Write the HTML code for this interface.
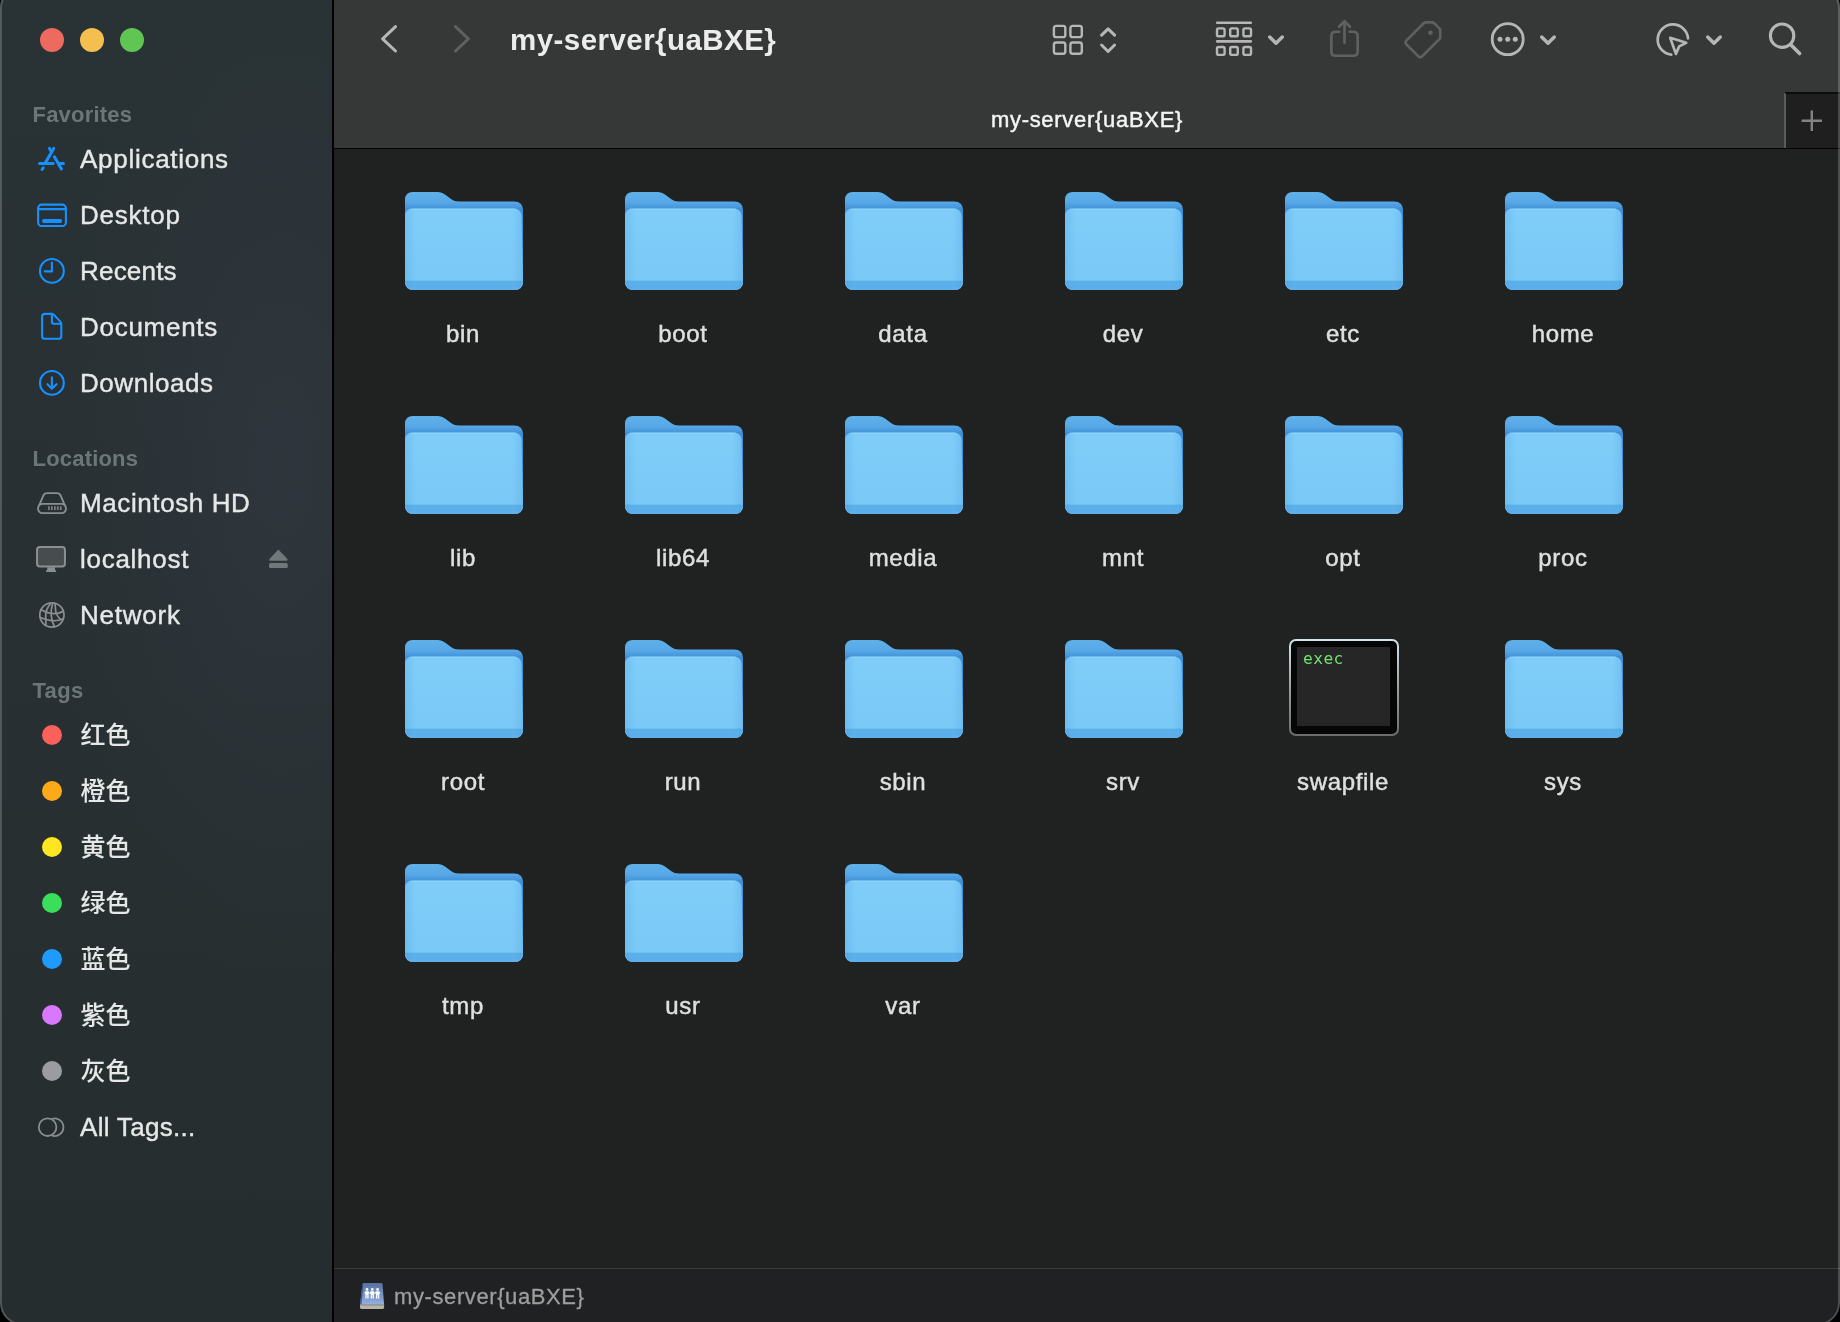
<!DOCTYPE html>
<html lang="en"><head><meta charset="utf-8"><title>my-server{uaBXE}</title>
<style>
*{box-sizing:border-box;margin:0;padding:0}
html,body{width:1840px;height:1322px;overflow:hidden;background:#000}
body{font-family:'Liberation Sans','Noto Sans CJK SC',sans-serif;position:relative;color:#e6e6e6}
.win{position:absolute;left:0;top:-14px;width:1840px;height:1338.6px;border-radius:22px;overflow:hidden;background:#1f2121}
.win:after{content:"";position:absolute;inset:0;border-radius:22px;border:2px solid rgba(255,255,255,.2);pointer-events:none;z-index:50}
.abs{position:absolute}
.sidebar{position:absolute;left:0;top:0;width:332px;height:1340px;background:radial-gradient(ellipse 70% 38% at 85% 36%,rgba(49,55,63,.75),rgba(49,55,63,0) 100%),linear-gradient(180deg,#293235 0%,#283033 45%,#252d2e 100%)}
.vsep{position:absolute;left:332px;top:0;width:2px;height:1340px;background:#000}
.toolbar{position:absolute;left:334px;top:0;width:1506px;height:162px;background:#363737}
.tbline{position:absolute;left:334px;top:161.7px;width:1506px;height:1.6px;background:#000}
.content{position:absolute;left:334px;top:163px;width:1506px;height:1119px;background:#202222}
.status{position:absolute;left:334px;top:1282px;width:1506px;height:54px;background:#202123;border-top:1.5px solid #3c3e3e}
.tl{position:absolute;width:24px;height:24px;border-radius:50%;top:42px}
.hdr{position:absolute;left:32.5px;font-size:22px;font-weight:700;color:#6c7679;line-height:30px;height:30px;white-space:nowrap}
.item{position:absolute;left:80px;font-size:26px;color:#e6e8e8;-webkit-text-stroke:.4px #e6e8e8;line-height:36px;height:36px;white-space:nowrap}
.dot{position:absolute;left:42px;width:20px;height:20px;border-radius:50%}
.lbl{position:absolute;width:200px;text-align:center;font-size:24px;line-height:32px;height:32px;color:#dfdfdf;-webkit-text-stroke:.45px #e2e2e2;letter-spacing:.65px;white-space:nowrap}
.title{position:absolute;left:510px;top:36px;font-size:29.5px;font-weight:700;line-height:36px;color:#ececec;white-space:nowrap;letter-spacing:.45px}
.tabtitle{position:absolute;left:334px;width:1506px;top:120.3px;text-align:center;font-size:22px;line-height:28px;color:#f4f4f4;white-space:nowrap;letter-spacing:.7px;-webkit-text-stroke:.45px #f4f4f4}
.newtab{position:absolute;left:1784px;top:106px;width:56px;height:56px;background:#1f1f1f;border-left:2px solid #5a5b5b;border-top:2px solid #0c0c0c}
.path{position:absolute;left:394px;top:1297px;font-size:22px;line-height:28px;color:#9e9e9e;white-space:nowrap;letter-spacing:.6px;-webkit-text-stroke:.3px #9e9e9e}
svg{position:absolute;overflow:visible}
.cjk{font-size:25px;font-weight:500;-webkit-text-stroke:0;left:80.5px}
.win{will-change:transform}

.exec{position:absolute;width:110px;height:97px;border-radius:7px;background:linear-gradient(180deg,#d6e6ee 0%,#9aa0a3 50%,#6c6c6c 100%);padding:1.6px}
.execin{width:100%;height:100%;border-radius:5px;background:#060606;padding:6px 7px 8px 6px;position:relative}
.execin:before{content:"";position:absolute;left:6px;top:6px;right:7px;bottom:8px;background:#262626}
.execin span{position:absolute;left:12.4px;top:7.1px;font-family:'DejaVu Sans Mono','Liberation Mono',monospace;font-size:16.3px;line-height:22px;color:#6fe26f;letter-spacing:.4px}
</style></head>
<body>
<svg width="0" height="0" style="position:absolute"><defs>
<linearGradient id="fback" gradientUnits="userSpaceOnUse" x1="0" y1="0" x2="0" y2="18"><stop offset="0" stop-color="#60b0e9"/><stop offset=".55" stop-color="#58a9e6"/><stop offset="1" stop-color="#3f8fd8"/></linearGradient>
<linearGradient id="ffront" x1="0" y1="0" x2="0" y2="1"><stop offset="0" stop-color="#80cdf9"/><stop offset="1" stop-color="#79c8f6"/></linearGradient>
<linearGradient id="fside" x1="0" y1="0" x2="1" y2="0"><stop offset="0" stop-color="#4a9fe0" stop-opacity=".3"/><stop offset=".09" stop-color="#4a9fe0" stop-opacity="0"/><stop offset=".91" stop-color="#4a9fe0" stop-opacity="0"/><stop offset="1" stop-color="#4a9fe0" stop-opacity=".3"/></linearGradient>
</defs></svg>
<div class="win">
<div class="sidebar"></div><div class="vsep"></div><div class="toolbar"></div><div class="tbline"></div><div class="content"></div><div class="status"></div>
<div class="tl" style="left:40px;background:#ed6a5e"></div>
<div class="tl" style="left:80px;background:#f5bf4f"></div>
<div class="tl" style="left:120px;background:#61c554"></div>
<div class="hdr" style="top:114px;letter-spacing:0.2px">Favorites</div>
<div class="item" style="top:155px;letter-spacing:0.72px">Applications</div>
<div class="item" style="top:211px;letter-spacing:0.75px">Desktop</div>
<div class="item" style="top:267px;letter-spacing:0.2px">Recents</div>
<div class="item" style="top:323px;letter-spacing:0.72px">Documents</div>
<div class="item" style="top:379px;letter-spacing:0.55px">Downloads</div>
<div class="hdr" style="top:458px;letter-spacing:0.2px">Locations</div>
<div class="item" style="top:499px;letter-spacing:0.6px">Macintosh HD</div>
<div class="item" style="top:555px;letter-spacing:0.72px">localhost</div>
<div class="item" style="top:611px;letter-spacing:0.78px">Network</div>
<div class="hdr" style="top:690px;letter-spacing:0.3px">Tags</div>
<div class="dot" style="top:739px;background:#fc605b"></div>
<div class="item cjk" style="top:731px">红色</div>
<div class="dot" style="top:795px;background:#fdaa1a"></div>
<div class="item cjk" style="top:787px">橙色</div>
<div class="dot" style="top:851px;background:#ffe620"></div>
<div class="item cjk" style="top:843px">黄色</div>
<div class="dot" style="top:907px;background:#39de5b"></div>
<div class="item cjk" style="top:899px">绿色</div>
<div class="dot" style="top:963px;background:#1f9bff"></div>
<div class="item cjk" style="top:955px">蓝色</div>
<div class="dot" style="top:1019px;background:#d878ff"></div>
<div class="item cjk" style="top:1011px">紫色</div>
<div class="dot" style="top:1075px;background:#9b9ca1"></div>
<div class="item cjk" style="top:1067px">灰色</div>
<div class="item" style="top:1123px;letter-spacing:0.3px">All Tags...</div>
<svg style="left:30px;top:154px" width="44" height="40" viewBox="0 0 44 40" ><g fill="none" stroke="#1791ff" stroke-width="3" stroke-linecap="round"><path d="M23.7 8.4 L15.4 22.8"/><path d="M19.5 8.4 L21.6 12"/><path d="M24.4 16.8 L31.4 29"/><path d="M9.6 23.5 H23.2"/><path d="M28.9 23.5 H33.4"/><path d="M13.2 27.8 L12.1 29.5"/></g></svg>
<svg style="left:30px;top:210px" width="44" height="40" viewBox="0 0 44 40" ><g fill="none" stroke="#1791ff" stroke-width="2.1"><rect x="8.1" y="8.6" width="27.8" height="21.4" rx="3.6"/><path d="M8.1 13.1 H35.9"/></g><rect x="12.3" y="23" width="19.5" height="3.9" rx="1.2" fill="#1791ff"/></svg>
<svg style="left:30px;top:266px" width="44" height="40" viewBox="0 0 44 40" ><g fill="none" stroke="#1791ff" stroke-width="2.1" stroke-linecap="round" stroke-linejoin="round"><circle cx="21.9" cy="18.9" r="11.9"/><path d="M21.9 10.6 V19.4 H14.8"/></g></svg>
<svg style="left:30px;top:322px" width="44" height="40" viewBox="0 0 44 40" ><g fill="none" stroke="#1791ff" stroke-width="2.1" stroke-linejoin="round"><path d="M15 5.9 H21.6 Q23 5.9 24 6.9 L30.3 13.6 Q31.3 14.7 31.3 16 V27.9 Q31.3 30.8 28.4 30.8 H15 Q12.1 30.8 12.1 27.9 V8.8 Q12.1 5.9 15 5.9 Z"/><path d="M21.9 6 V13.4 Q21.9 15.7 24.2 15.7 H31.2"/></g></svg>
<svg style="left:30px;top:378px" width="44" height="40" viewBox="0 0 44 40" ><g fill="none" stroke="#1791ff" stroke-width="2.1" stroke-linecap="round" stroke-linejoin="round"><circle cx="21.9" cy="18.9" r="11.9"/><path d="M21.9 13.2 V24.6 M17.5 20.2 L21.9 24.7 L26.5 20.2"/></g></svg>
<svg style="left:30px;top:498px" width="44" height="40" viewBox="0 0 44 40" ><g fill="none" stroke="#8c8f91" stroke-width="1.9" stroke-linejoin="round"><rect x="8.05" y="19.9" width="27.9" height="9.2" rx="4.6"/><path d="M8.9 22.2 L13.3 11.6 Q14.4 9.15 17 9.15 H27 Q29.6 9.15 30.7 11.6 L35.1 22.2"/></g><g fill="#8c8f91" opacity=".85"><rect x="18.1" y="22.3" width="1.7" height="3.8"/><rect x="21" y="22.3" width="1.7" height="3.8"/><rect x="24" y="22.3" width="1.7" height="3.8"/><rect x="26.9" y="22.3" width="1.7" height="3.8"/><rect x="29.9" y="22.3" width="1.7" height="3.8"/></g></svg>
<svg style="left:30px;top:554px" width="44" height="40" viewBox="0 0 44 40" ><rect x="7.05" y="7.05" width="27.9" height="19.5" rx="2.8" fill="#474c4f" stroke="#8c8f91" stroke-width="2"/><path d="M17.2 27.3 H25 V30.2 H26.1 V32 H16.1 V30.2 H17.2 Z" fill="#8c8f91"/></svg>
<svg style="left:256px;top:554px" width="44" height="40" viewBox="0 0 44 40" ><g fill="#70787b"><path d="M22.4 9.6 L31.4 19 Q32.2 20.8 30.6 20.8 H14.2 Q12.6 20.8 13.4 19 Z"/><rect x="13" y="22.9" width="18.8" height="5.1" rx="1.6"/></g></svg>
<svg style="left:30px;top:610px" width="44" height="40" viewBox="0 0 44 40" ><g fill="none" stroke="#8c8f91" stroke-width="1.7" stroke-linecap="round"><circle cx="21.9" cy="19" r="12.1"/><path d="M20.2 8 Q15.5 14 15.7 20 T16 29.2"/><path d="M22.6 7.6 Q20.6 14 21.3 20 T24.4 30.6"/><path d="M25.1 8 Q25.4 13 26 17 Q27.5 20.5 30.6 23.6"/><path d="M11 13.8 Q18 17.6 24 17.6 T33.2 15"/><path d="M10.4 21.4 Q16 24 22 24.6 T32.6 23"/></g></svg>
<svg style="left:30px;top:1122px" width="44" height="40" viewBox="0 0 44 40" ><g fill="none" stroke="#8a8d8d" stroke-width="1.8"><circle cx="17.6" cy="19.2" r="8.8"/><path d="M22 10.8 A8.8 8.8 0 1 1 22 27.6"/></g></svg>
<div class="title">my-server{uaBXE}</div>
<div class="tabtitle">my-server{uaBXE}</div>
<div class="newtab"></div>
<svg style="left:370px;top:28px" width="110" height="50" viewBox="0 0 110 50" ><path d="M25.5 12.6 L12.6 24.8 L25.5 37" fill="none" stroke="#b6b6b6" stroke-width="3" stroke-linecap="round" stroke-linejoin="round"/><path d="M85.5 12.6 L98.4 24.8 L85.5 37" fill="none" stroke="#5f6060" stroke-width="3" stroke-linecap="round" stroke-linejoin="round"/></svg>
<svg style="left:1040px;top:28px" width="80" height="50" viewBox="0 0 80 50" ><g fill="none" stroke="#b6b6b6" stroke-width="2.4"><rect x="13.9" y="11.9" width="11.4" height="11.2" rx="2.2"/><rect x="13.9" y="28.5" width="11.4" height="11.2" rx="2.2"/><rect x="30.4" y="11.9" width="11.4" height="11.2" rx="2.2"/><rect x="30.4" y="28.5" width="11.4" height="11.2" rx="2.2"/></g><g fill="none" stroke="#b6b6b6" stroke-width="3" stroke-linecap="round" stroke-linejoin="round"><path d="M61.6 21.2 L68.1 14.9 L74.6 21.2"/><path d="M61.6 31 L68.1 37.5 L74.6 31"/></g></svg>
<svg style="left:1210px;top:28px" width="50" height="50" viewBox="0 0 50 50" ><g fill="none" stroke="#b6b6b6" stroke-width="2.4"><rect x="7" y="14.4" width="7.6" height="7.9" rx="1.6"/><rect x="7" y="33" width="7.6" height="7.9" rx="1.6"/><rect x="20.2" y="14.4" width="7.6" height="7.9" rx="1.6"/><rect x="20.2" y="33" width="7.6" height="7.9" rx="1.6"/><rect x="33.4" y="14.4" width="7.6" height="7.9" rx="1.6"/><rect x="33.4" y="33" width="7.6" height="7.9" rx="1.6"/></g><g stroke="#b6b6b6" stroke-width="2.6" stroke-linecap="round"><path d="M7.2 8.8 H40.8"/><path d="M7.2 27.4 H40.8"/></g></svg>
<svg style="left:1266px;top:46.1px" width="20" height="16" viewBox="0 0 20 16" ><path d="M3.7 5 L10 11.3 L16.3 5" fill="none" stroke="#b6b6b6" stroke-width="3.4" stroke-linecap="round" stroke-linejoin="round"/></svg>
<svg style="left:1320px;top:28px" width="50" height="50" viewBox="0 0 50 50" ><g fill="none" stroke="#5f6060" stroke-width="2.7" stroke-linecap="round" stroke-linejoin="round"><path d="M19.3 17.75 H15.6 Q11.35 17.75 11.35 22 V37.5 Q11.35 41.75 15.6 41.75 H33.4 Q37.65 41.75 37.65 37.5 V22 Q37.65 17.75 33.4 17.75 H29.7"/><path d="M24.5 8 V28.8"/><path d="M19 12.7 L24.5 7.3 L30 12.7"/></g></svg>
<svg style="left:1400px;top:28px" width="50" height="50" viewBox="0 0 50 50" ><path d="M26.6 8.4 H32.4 Q33.4 8.4 34.2 9.2 L39.4 14.4 Q40.2 15.2 40.2 16.2 V23.3 Q40.2 24.3 39.4 25.1 L22.35 42.15 Q20.25 44.25 18.15 42.15 L6.55 30.55 Q4.45 28.45 6.55 26.35 L23.7 9.2 Q24.5 8.4 26.6 8.4 Z" fill="none" stroke="#5f6060" stroke-width="2.7" stroke-linejoin="round"/><circle cx="30.5" cy="18.7" r="2.3" fill="#5f6060"/></svg>
<svg style="left:1485px;top:28px" width="50" height="50" viewBox="0 0 50 50" ><circle cx="22.7" cy="25.2" r="15.5" fill="none" stroke="#b6b6b6" stroke-width="2.8"/><g fill="#b6b6b6"><circle cx="15" cy="25.2" r="2.5"/><circle cx="22.7" cy="25.2" r="2.5"/><circle cx="30.3" cy="25.2" r="2.5"/></g></svg>
<svg style="left:1538px;top:45.9px" width="20" height="16" viewBox="0 0 20 16" ><path d="M3.7 5 L10 11.3 L16.3 5" fill="none" stroke="#b6b6b6" stroke-width="3.4" stroke-linecap="round" stroke-linejoin="round"/></svg>
<svg style="left:1650px;top:28px" width="50" height="50" viewBox="0 0 50 50" ><g fill="none" stroke="#b6b6b6" stroke-width="2.7" stroke-linecap="round" stroke-linejoin="round"><path d="M21.24 40.7 A15.2 15.2 0 1 1 38.06 24.46"/><path d="M20.2 23.8 L36.2 28.8 L29.2 32.4 L25.9 39.9 Z"/></g></svg>
<svg style="left:1704px;top:45.9px" width="20" height="16" viewBox="0 0 20 16" ><path d="M3.7 5 L10 11.3 L16.3 5" fill="none" stroke="#b6b6b6" stroke-width="3.4" stroke-linecap="round" stroke-linejoin="round"/></svg>
<svg style="left:1760px;top:28px" width="50" height="50" viewBox="0 0 50 50" ><g fill="none" stroke="#b6b6b6" stroke-linecap="round"><circle cx="22.1" cy="21.7" r="11.7" stroke-width="3.1"/><path d="M30.6 30.6 L39.6 39.6" stroke-width="3.6"/></g></svg>
<svg style="left:1796px;top:120px" width="32" height="32" viewBox="0 0 32 32" ><path d="M5.6 14.8 H26 M15.8 4.6 V25" stroke="#838383" stroke-width="2.4" fill="none"/></svg>
<svg class="folder" style="left:405px;top:206px" width="118" height="98" viewBox="0 0 118 98"><path d="M0 8 Q0 0 8 0 H33 Q37 0 40 2.5 L46 7 Q49 9.5 54 9.5 H109 Q118 9.5 118 18 V89 Q118 98 109 98 H9 Q0 98 0 89 Z" fill="url(#fback)"/><path d="M0 24 Q0 16.5 8 16.5 H108 Q116 16.5 116.5 24 L118 89 Q118 98 109 98 H9 Q0 98 0 89 Z" fill="url(#ffront)"/><path d="M0 88 H118 V89 Q118 98 109 98 H9 Q0 98 0 89 Z" fill="#5cb0ea"/><path d="M0 88.5 H118" stroke="#8ad2fb" stroke-opacity=".45" stroke-width="1"/><path d="M0 24 Q0 16.5 8 16.5 H108 Q116 16.5 116.5 24 L118 89 Q118 98 109 98 H9 Q0 98 0 89 Z" fill="url(#fside)"/><path d="M5 17.1 H111" stroke="#a0dcfd" stroke-opacity=".55" stroke-width="1"/></svg>
<div class="lbl" style="left:363px;top:331.6px">bin</div>
<svg class="folder" style="left:625px;top:206px" width="118" height="98" viewBox="0 0 118 98"><path d="M0 8 Q0 0 8 0 H33 Q37 0 40 2.5 L46 7 Q49 9.5 54 9.5 H109 Q118 9.5 118 18 V89 Q118 98 109 98 H9 Q0 98 0 89 Z" fill="url(#fback)"/><path d="M0 24 Q0 16.5 8 16.5 H108 Q116 16.5 116.5 24 L118 89 Q118 98 109 98 H9 Q0 98 0 89 Z" fill="url(#ffront)"/><path d="M0 88 H118 V89 Q118 98 109 98 H9 Q0 98 0 89 Z" fill="#5cb0ea"/><path d="M0 88.5 H118" stroke="#8ad2fb" stroke-opacity=".45" stroke-width="1"/><path d="M0 24 Q0 16.5 8 16.5 H108 Q116 16.5 116.5 24 L118 89 Q118 98 109 98 H9 Q0 98 0 89 Z" fill="url(#fside)"/><path d="M5 17.1 H111" stroke="#a0dcfd" stroke-opacity=".55" stroke-width="1"/></svg>
<div class="lbl" style="left:583px;top:331.6px">boot</div>
<svg class="folder" style="left:845px;top:206px" width="118" height="98" viewBox="0 0 118 98"><path d="M0 8 Q0 0 8 0 H33 Q37 0 40 2.5 L46 7 Q49 9.5 54 9.5 H109 Q118 9.5 118 18 V89 Q118 98 109 98 H9 Q0 98 0 89 Z" fill="url(#fback)"/><path d="M0 24 Q0 16.5 8 16.5 H108 Q116 16.5 116.5 24 L118 89 Q118 98 109 98 H9 Q0 98 0 89 Z" fill="url(#ffront)"/><path d="M0 88 H118 V89 Q118 98 109 98 H9 Q0 98 0 89 Z" fill="#5cb0ea"/><path d="M0 88.5 H118" stroke="#8ad2fb" stroke-opacity=".45" stroke-width="1"/><path d="M0 24 Q0 16.5 8 16.5 H108 Q116 16.5 116.5 24 L118 89 Q118 98 109 98 H9 Q0 98 0 89 Z" fill="url(#fside)"/><path d="M5 17.1 H111" stroke="#a0dcfd" stroke-opacity=".55" stroke-width="1"/></svg>
<div class="lbl" style="left:803px;top:331.6px">data</div>
<svg class="folder" style="left:1065px;top:206px" width="118" height="98" viewBox="0 0 118 98"><path d="M0 8 Q0 0 8 0 H33 Q37 0 40 2.5 L46 7 Q49 9.5 54 9.5 H109 Q118 9.5 118 18 V89 Q118 98 109 98 H9 Q0 98 0 89 Z" fill="url(#fback)"/><path d="M0 24 Q0 16.5 8 16.5 H108 Q116 16.5 116.5 24 L118 89 Q118 98 109 98 H9 Q0 98 0 89 Z" fill="url(#ffront)"/><path d="M0 88 H118 V89 Q118 98 109 98 H9 Q0 98 0 89 Z" fill="#5cb0ea"/><path d="M0 88.5 H118" stroke="#8ad2fb" stroke-opacity=".45" stroke-width="1"/><path d="M0 24 Q0 16.5 8 16.5 H108 Q116 16.5 116.5 24 L118 89 Q118 98 109 98 H9 Q0 98 0 89 Z" fill="url(#fside)"/><path d="M5 17.1 H111" stroke="#a0dcfd" stroke-opacity=".55" stroke-width="1"/></svg>
<div class="lbl" style="left:1023px;top:331.6px">dev</div>
<svg class="folder" style="left:1285px;top:206px" width="118" height="98" viewBox="0 0 118 98"><path d="M0 8 Q0 0 8 0 H33 Q37 0 40 2.5 L46 7 Q49 9.5 54 9.5 H109 Q118 9.5 118 18 V89 Q118 98 109 98 H9 Q0 98 0 89 Z" fill="url(#fback)"/><path d="M0 24 Q0 16.5 8 16.5 H108 Q116 16.5 116.5 24 L118 89 Q118 98 109 98 H9 Q0 98 0 89 Z" fill="url(#ffront)"/><path d="M0 88 H118 V89 Q118 98 109 98 H9 Q0 98 0 89 Z" fill="#5cb0ea"/><path d="M0 88.5 H118" stroke="#8ad2fb" stroke-opacity=".45" stroke-width="1"/><path d="M0 24 Q0 16.5 8 16.5 H108 Q116 16.5 116.5 24 L118 89 Q118 98 109 98 H9 Q0 98 0 89 Z" fill="url(#fside)"/><path d="M5 17.1 H111" stroke="#a0dcfd" stroke-opacity=".55" stroke-width="1"/></svg>
<div class="lbl" style="left:1243px;top:331.6px">etc</div>
<svg class="folder" style="left:1505px;top:206px" width="118" height="98" viewBox="0 0 118 98"><path d="M0 8 Q0 0 8 0 H33 Q37 0 40 2.5 L46 7 Q49 9.5 54 9.5 H109 Q118 9.5 118 18 V89 Q118 98 109 98 H9 Q0 98 0 89 Z" fill="url(#fback)"/><path d="M0 24 Q0 16.5 8 16.5 H108 Q116 16.5 116.5 24 L118 89 Q118 98 109 98 H9 Q0 98 0 89 Z" fill="url(#ffront)"/><path d="M0 88 H118 V89 Q118 98 109 98 H9 Q0 98 0 89 Z" fill="#5cb0ea"/><path d="M0 88.5 H118" stroke="#8ad2fb" stroke-opacity=".45" stroke-width="1"/><path d="M0 24 Q0 16.5 8 16.5 H108 Q116 16.5 116.5 24 L118 89 Q118 98 109 98 H9 Q0 98 0 89 Z" fill="url(#fside)"/><path d="M5 17.1 H111" stroke="#a0dcfd" stroke-opacity=".55" stroke-width="1"/></svg>
<div class="lbl" style="left:1463px;top:331.6px">home</div>
<svg class="folder" style="left:405px;top:430px" width="118" height="98" viewBox="0 0 118 98"><path d="M0 8 Q0 0 8 0 H33 Q37 0 40 2.5 L46 7 Q49 9.5 54 9.5 H109 Q118 9.5 118 18 V89 Q118 98 109 98 H9 Q0 98 0 89 Z" fill="url(#fback)"/><path d="M0 24 Q0 16.5 8 16.5 H108 Q116 16.5 116.5 24 L118 89 Q118 98 109 98 H9 Q0 98 0 89 Z" fill="url(#ffront)"/><path d="M0 88 H118 V89 Q118 98 109 98 H9 Q0 98 0 89 Z" fill="#5cb0ea"/><path d="M0 88.5 H118" stroke="#8ad2fb" stroke-opacity=".45" stroke-width="1"/><path d="M0 24 Q0 16.5 8 16.5 H108 Q116 16.5 116.5 24 L118 89 Q118 98 109 98 H9 Q0 98 0 89 Z" fill="url(#fside)"/><path d="M5 17.1 H111" stroke="#a0dcfd" stroke-opacity=".55" stroke-width="1"/></svg>
<div class="lbl" style="left:363px;top:555.6px">lib</div>
<svg class="folder" style="left:625px;top:430px" width="118" height="98" viewBox="0 0 118 98"><path d="M0 8 Q0 0 8 0 H33 Q37 0 40 2.5 L46 7 Q49 9.5 54 9.5 H109 Q118 9.5 118 18 V89 Q118 98 109 98 H9 Q0 98 0 89 Z" fill="url(#fback)"/><path d="M0 24 Q0 16.5 8 16.5 H108 Q116 16.5 116.5 24 L118 89 Q118 98 109 98 H9 Q0 98 0 89 Z" fill="url(#ffront)"/><path d="M0 88 H118 V89 Q118 98 109 98 H9 Q0 98 0 89 Z" fill="#5cb0ea"/><path d="M0 88.5 H118" stroke="#8ad2fb" stroke-opacity=".45" stroke-width="1"/><path d="M0 24 Q0 16.5 8 16.5 H108 Q116 16.5 116.5 24 L118 89 Q118 98 109 98 H9 Q0 98 0 89 Z" fill="url(#fside)"/><path d="M5 17.1 H111" stroke="#a0dcfd" stroke-opacity=".55" stroke-width="1"/></svg>
<div class="lbl" style="left:583px;top:555.6px">lib64</div>
<svg class="folder" style="left:845px;top:430px" width="118" height="98" viewBox="0 0 118 98"><path d="M0 8 Q0 0 8 0 H33 Q37 0 40 2.5 L46 7 Q49 9.5 54 9.5 H109 Q118 9.5 118 18 V89 Q118 98 109 98 H9 Q0 98 0 89 Z" fill="url(#fback)"/><path d="M0 24 Q0 16.5 8 16.5 H108 Q116 16.5 116.5 24 L118 89 Q118 98 109 98 H9 Q0 98 0 89 Z" fill="url(#ffront)"/><path d="M0 88 H118 V89 Q118 98 109 98 H9 Q0 98 0 89 Z" fill="#5cb0ea"/><path d="M0 88.5 H118" stroke="#8ad2fb" stroke-opacity=".45" stroke-width="1"/><path d="M0 24 Q0 16.5 8 16.5 H108 Q116 16.5 116.5 24 L118 89 Q118 98 109 98 H9 Q0 98 0 89 Z" fill="url(#fside)"/><path d="M5 17.1 H111" stroke="#a0dcfd" stroke-opacity=".55" stroke-width="1"/></svg>
<div class="lbl" style="left:803px;top:555.6px">media</div>
<svg class="folder" style="left:1065px;top:430px" width="118" height="98" viewBox="0 0 118 98"><path d="M0 8 Q0 0 8 0 H33 Q37 0 40 2.5 L46 7 Q49 9.5 54 9.5 H109 Q118 9.5 118 18 V89 Q118 98 109 98 H9 Q0 98 0 89 Z" fill="url(#fback)"/><path d="M0 24 Q0 16.5 8 16.5 H108 Q116 16.5 116.5 24 L118 89 Q118 98 109 98 H9 Q0 98 0 89 Z" fill="url(#ffront)"/><path d="M0 88 H118 V89 Q118 98 109 98 H9 Q0 98 0 89 Z" fill="#5cb0ea"/><path d="M0 88.5 H118" stroke="#8ad2fb" stroke-opacity=".45" stroke-width="1"/><path d="M0 24 Q0 16.5 8 16.5 H108 Q116 16.5 116.5 24 L118 89 Q118 98 109 98 H9 Q0 98 0 89 Z" fill="url(#fside)"/><path d="M5 17.1 H111" stroke="#a0dcfd" stroke-opacity=".55" stroke-width="1"/></svg>
<div class="lbl" style="left:1023px;top:555.6px">mnt</div>
<svg class="folder" style="left:1285px;top:430px" width="118" height="98" viewBox="0 0 118 98"><path d="M0 8 Q0 0 8 0 H33 Q37 0 40 2.5 L46 7 Q49 9.5 54 9.5 H109 Q118 9.5 118 18 V89 Q118 98 109 98 H9 Q0 98 0 89 Z" fill="url(#fback)"/><path d="M0 24 Q0 16.5 8 16.5 H108 Q116 16.5 116.5 24 L118 89 Q118 98 109 98 H9 Q0 98 0 89 Z" fill="url(#ffront)"/><path d="M0 88 H118 V89 Q118 98 109 98 H9 Q0 98 0 89 Z" fill="#5cb0ea"/><path d="M0 88.5 H118" stroke="#8ad2fb" stroke-opacity=".45" stroke-width="1"/><path d="M0 24 Q0 16.5 8 16.5 H108 Q116 16.5 116.5 24 L118 89 Q118 98 109 98 H9 Q0 98 0 89 Z" fill="url(#fside)"/><path d="M5 17.1 H111" stroke="#a0dcfd" stroke-opacity=".55" stroke-width="1"/></svg>
<div class="lbl" style="left:1243px;top:555.6px">opt</div>
<svg class="folder" style="left:1505px;top:430px" width="118" height="98" viewBox="0 0 118 98"><path d="M0 8 Q0 0 8 0 H33 Q37 0 40 2.5 L46 7 Q49 9.5 54 9.5 H109 Q118 9.5 118 18 V89 Q118 98 109 98 H9 Q0 98 0 89 Z" fill="url(#fback)"/><path d="M0 24 Q0 16.5 8 16.5 H108 Q116 16.5 116.5 24 L118 89 Q118 98 109 98 H9 Q0 98 0 89 Z" fill="url(#ffront)"/><path d="M0 88 H118 V89 Q118 98 109 98 H9 Q0 98 0 89 Z" fill="#5cb0ea"/><path d="M0 88.5 H118" stroke="#8ad2fb" stroke-opacity=".45" stroke-width="1"/><path d="M0 24 Q0 16.5 8 16.5 H108 Q116 16.5 116.5 24 L118 89 Q118 98 109 98 H9 Q0 98 0 89 Z" fill="url(#fside)"/><path d="M5 17.1 H111" stroke="#a0dcfd" stroke-opacity=".55" stroke-width="1"/></svg>
<div class="lbl" style="left:1463px;top:555.6px">proc</div>
<svg class="folder" style="left:405px;top:654px" width="118" height="98" viewBox="0 0 118 98"><path d="M0 8 Q0 0 8 0 H33 Q37 0 40 2.5 L46 7 Q49 9.5 54 9.5 H109 Q118 9.5 118 18 V89 Q118 98 109 98 H9 Q0 98 0 89 Z" fill="url(#fback)"/><path d="M0 24 Q0 16.5 8 16.5 H108 Q116 16.5 116.5 24 L118 89 Q118 98 109 98 H9 Q0 98 0 89 Z" fill="url(#ffront)"/><path d="M0 88 H118 V89 Q118 98 109 98 H9 Q0 98 0 89 Z" fill="#5cb0ea"/><path d="M0 88.5 H118" stroke="#8ad2fb" stroke-opacity=".45" stroke-width="1"/><path d="M0 24 Q0 16.5 8 16.5 H108 Q116 16.5 116.5 24 L118 89 Q118 98 109 98 H9 Q0 98 0 89 Z" fill="url(#fside)"/><path d="M5 17.1 H111" stroke="#a0dcfd" stroke-opacity=".55" stroke-width="1"/></svg>
<div class="lbl" style="left:363px;top:779.6px">root</div>
<svg class="folder" style="left:625px;top:654px" width="118" height="98" viewBox="0 0 118 98"><path d="M0 8 Q0 0 8 0 H33 Q37 0 40 2.5 L46 7 Q49 9.5 54 9.5 H109 Q118 9.5 118 18 V89 Q118 98 109 98 H9 Q0 98 0 89 Z" fill="url(#fback)"/><path d="M0 24 Q0 16.5 8 16.5 H108 Q116 16.5 116.5 24 L118 89 Q118 98 109 98 H9 Q0 98 0 89 Z" fill="url(#ffront)"/><path d="M0 88 H118 V89 Q118 98 109 98 H9 Q0 98 0 89 Z" fill="#5cb0ea"/><path d="M0 88.5 H118" stroke="#8ad2fb" stroke-opacity=".45" stroke-width="1"/><path d="M0 24 Q0 16.5 8 16.5 H108 Q116 16.5 116.5 24 L118 89 Q118 98 109 98 H9 Q0 98 0 89 Z" fill="url(#fside)"/><path d="M5 17.1 H111" stroke="#a0dcfd" stroke-opacity=".55" stroke-width="1"/></svg>
<div class="lbl" style="left:583px;top:779.6px">run</div>
<svg class="folder" style="left:845px;top:654px" width="118" height="98" viewBox="0 0 118 98"><path d="M0 8 Q0 0 8 0 H33 Q37 0 40 2.5 L46 7 Q49 9.5 54 9.5 H109 Q118 9.5 118 18 V89 Q118 98 109 98 H9 Q0 98 0 89 Z" fill="url(#fback)"/><path d="M0 24 Q0 16.5 8 16.5 H108 Q116 16.5 116.5 24 L118 89 Q118 98 109 98 H9 Q0 98 0 89 Z" fill="url(#ffront)"/><path d="M0 88 H118 V89 Q118 98 109 98 H9 Q0 98 0 89 Z" fill="#5cb0ea"/><path d="M0 88.5 H118" stroke="#8ad2fb" stroke-opacity=".45" stroke-width="1"/><path d="M0 24 Q0 16.5 8 16.5 H108 Q116 16.5 116.5 24 L118 89 Q118 98 109 98 H9 Q0 98 0 89 Z" fill="url(#fside)"/><path d="M5 17.1 H111" stroke="#a0dcfd" stroke-opacity=".55" stroke-width="1"/></svg>
<div class="lbl" style="left:803px;top:779.6px">sbin</div>
<svg class="folder" style="left:1065px;top:654px" width="118" height="98" viewBox="0 0 118 98"><path d="M0 8 Q0 0 8 0 H33 Q37 0 40 2.5 L46 7 Q49 9.5 54 9.5 H109 Q118 9.5 118 18 V89 Q118 98 109 98 H9 Q0 98 0 89 Z" fill="url(#fback)"/><path d="M0 24 Q0 16.5 8 16.5 H108 Q116 16.5 116.5 24 L118 89 Q118 98 109 98 H9 Q0 98 0 89 Z" fill="url(#ffront)"/><path d="M0 88 H118 V89 Q118 98 109 98 H9 Q0 98 0 89 Z" fill="#5cb0ea"/><path d="M0 88.5 H118" stroke="#8ad2fb" stroke-opacity=".45" stroke-width="1"/><path d="M0 24 Q0 16.5 8 16.5 H108 Q116 16.5 116.5 24 L118 89 Q118 98 109 98 H9 Q0 98 0 89 Z" fill="url(#fside)"/><path d="M5 17.1 H111" stroke="#a0dcfd" stroke-opacity=".55" stroke-width="1"/></svg>
<div class="lbl" style="left:1023px;top:779.6px">srv</div>
<div class="exec" style="left:1289px;top:653px"><div class="execin"><span>exec</span></div></div>
<div class="lbl" style="left:1243px;top:779.6px">swapfile</div>
<svg class="folder" style="left:1505px;top:654px" width="118" height="98" viewBox="0 0 118 98"><path d="M0 8 Q0 0 8 0 H33 Q37 0 40 2.5 L46 7 Q49 9.5 54 9.5 H109 Q118 9.5 118 18 V89 Q118 98 109 98 H9 Q0 98 0 89 Z" fill="url(#fback)"/><path d="M0 24 Q0 16.5 8 16.5 H108 Q116 16.5 116.5 24 L118 89 Q118 98 109 98 H9 Q0 98 0 89 Z" fill="url(#ffront)"/><path d="M0 88 H118 V89 Q118 98 109 98 H9 Q0 98 0 89 Z" fill="#5cb0ea"/><path d="M0 88.5 H118" stroke="#8ad2fb" stroke-opacity=".45" stroke-width="1"/><path d="M0 24 Q0 16.5 8 16.5 H108 Q116 16.5 116.5 24 L118 89 Q118 98 109 98 H9 Q0 98 0 89 Z" fill="url(#fside)"/><path d="M5 17.1 H111" stroke="#a0dcfd" stroke-opacity=".55" stroke-width="1"/></svg>
<div class="lbl" style="left:1463px;top:779.6px">sys</div>
<svg class="folder" style="left:405px;top:878px" width="118" height="98" viewBox="0 0 118 98"><path d="M0 8 Q0 0 8 0 H33 Q37 0 40 2.5 L46 7 Q49 9.5 54 9.5 H109 Q118 9.5 118 18 V89 Q118 98 109 98 H9 Q0 98 0 89 Z" fill="url(#fback)"/><path d="M0 24 Q0 16.5 8 16.5 H108 Q116 16.5 116.5 24 L118 89 Q118 98 109 98 H9 Q0 98 0 89 Z" fill="url(#ffront)"/><path d="M0 88 H118 V89 Q118 98 109 98 H9 Q0 98 0 89 Z" fill="#5cb0ea"/><path d="M0 88.5 H118" stroke="#8ad2fb" stroke-opacity=".45" stroke-width="1"/><path d="M0 24 Q0 16.5 8 16.5 H108 Q116 16.5 116.5 24 L118 89 Q118 98 109 98 H9 Q0 98 0 89 Z" fill="url(#fside)"/><path d="M5 17.1 H111" stroke="#a0dcfd" stroke-opacity=".55" stroke-width="1"/></svg>
<div class="lbl" style="left:363px;top:1003.6px">tmp</div>
<svg class="folder" style="left:625px;top:878px" width="118" height="98" viewBox="0 0 118 98"><path d="M0 8 Q0 0 8 0 H33 Q37 0 40 2.5 L46 7 Q49 9.5 54 9.5 H109 Q118 9.5 118 18 V89 Q118 98 109 98 H9 Q0 98 0 89 Z" fill="url(#fback)"/><path d="M0 24 Q0 16.5 8 16.5 H108 Q116 16.5 116.5 24 L118 89 Q118 98 109 98 H9 Q0 98 0 89 Z" fill="url(#ffront)"/><path d="M0 88 H118 V89 Q118 98 109 98 H9 Q0 98 0 89 Z" fill="#5cb0ea"/><path d="M0 88.5 H118" stroke="#8ad2fb" stroke-opacity=".45" stroke-width="1"/><path d="M0 24 Q0 16.5 8 16.5 H108 Q116 16.5 116.5 24 L118 89 Q118 98 109 98 H9 Q0 98 0 89 Z" fill="url(#fside)"/><path d="M5 17.1 H111" stroke="#a0dcfd" stroke-opacity=".55" stroke-width="1"/></svg>
<div class="lbl" style="left:583px;top:1003.6px">usr</div>
<svg class="folder" style="left:845px;top:878px" width="118" height="98" viewBox="0 0 118 98"><path d="M0 8 Q0 0 8 0 H33 Q37 0 40 2.5 L46 7 Q49 9.5 54 9.5 H109 Q118 9.5 118 18 V89 Q118 98 109 98 H9 Q0 98 0 89 Z" fill="url(#fback)"/><path d="M0 24 Q0 16.5 8 16.5 H108 Q116 16.5 116.5 24 L118 89 Q118 98 109 98 H9 Q0 98 0 89 Z" fill="url(#ffront)"/><path d="M0 88 H118 V89 Q118 98 109 98 H9 Q0 98 0 89 Z" fill="#5cb0ea"/><path d="M0 88.5 H118" stroke="#8ad2fb" stroke-opacity=".45" stroke-width="1"/><path d="M0 24 Q0 16.5 8 16.5 H108 Q116 16.5 116.5 24 L118 89 Q118 98 109 98 H9 Q0 98 0 89 Z" fill="url(#fside)"/><path d="M5 17.1 H111" stroke="#a0dcfd" stroke-opacity=".55" stroke-width="1"/></svg>
<div class="lbl" style="left:803px;top:1003.6px">var</div>
<div class="path">my-server{uaBXE}</div>
<svg style="left:352px;top:1290px" width="40" height="40" viewBox="0 0 40 40" ><defs><linearGradient id="hdg" x1="0" y1="0" x2="0" y2="1"><stop offset="0" stop-color="#56709f"/><stop offset="1" stop-color="#93b1e4"/></linearGradient></defs><path d="M11.6 6.9 H29.4 Q30.3 6.9 30.5 7.8 L32.1 28.8 H8 L10.5 7.8 Q10.7 6.9 11.6 6.9 Z" fill="url(#hdg)"/><path d="M10.5 7.8 L8 28.8 L9.4 28.8 L11.4 8.6 Z" fill="#3c568a"/><path d="M8 28.6 H32.1 V31.6 Q32.1 33 30.8 33 H9.3 Q8 33 8 31.6 Z" fill="#b9b4aa"/><path d="M8 28.6 H32.1 V29.6 H8 Z" fill="#8c8b8e"/><rect x="29" y="30" width="1.7" height="1.5" fill="#8fd46a"/><g fill="#ffffff"><circle cx="15" cy="13.4" r="1.35"/><path d="M13.4 15.2 H16.6 L18 17.6 L16.6 17.4 V22.4 H15.3 V19 H14.7 V22.4 H13.4 V17.4 L12 17.6 Z"/><circle cx="20.3" cy="13.4" r="1.35"/><path d="M18.7 15.2 H21.900000000000002 L23.3 17.6 L21.900000000000002 17.4 V22.4 H20.6 V19 H20.0 V22.4 H18.7 V17.4 L17.3 17.6 Z"/><circle cx="25.6" cy="13.4" r="1.35"/><path d="M24.0 15.2 H27.200000000000003 L28.6 17.6 L27.200000000000003 17.4 V22.4 H25.900000000000002 V19 H25.3 V22.4 H24.0 V17.4 L22.6 17.6 Z"/></g></svg>
</div>
</body></html>
